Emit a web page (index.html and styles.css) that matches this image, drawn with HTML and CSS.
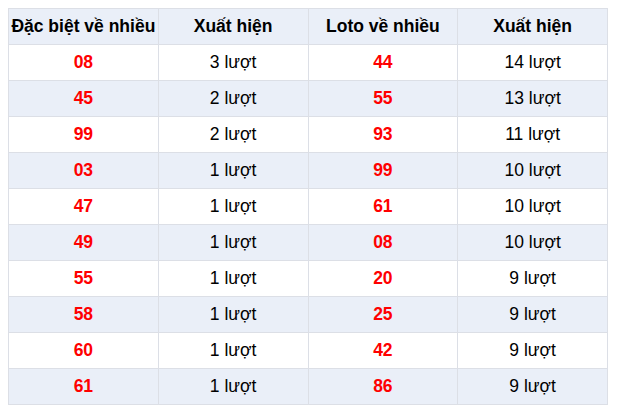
FILE: index.html
```html
<!DOCTYPE html>
<html lang="vi">
<head>
<meta charset="utf-8">
<link rel="stylesheet" href="styles.css">
</head>
<body>
<table class="stats">
  <thead>
    <tr><th>Đặc biệt về nhiều</th><th>Xuất hiện</th><th>Loto về nhiều</th><th>Xuất hiện</th></tr>
  </thead>
  <tbody>
    <tr><td class="num">08</td><td>3 lượt</td><td class="num">44</td><td>14 lượt</td></tr>
    <tr><td class="num">45</td><td>2 lượt</td><td class="num">55</td><td>13 lượt</td></tr>
    <tr><td class="num">99</td><td>2 lượt</td><td class="num">93</td><td>11 lượt</td></tr>
    <tr><td class="num">03</td><td>1 lượt</td><td class="num">99</td><td>10 lượt</td></tr>
    <tr><td class="num">47</td><td>1 lượt</td><td class="num">61</td><td>10 lượt</td></tr>
    <tr><td class="num">49</td><td>1 lượt</td><td class="num">08</td><td>10 lượt</td></tr>
    <tr><td class="num">55</td><td>1 lượt</td><td class="num">20</td><td>9 lượt</td></tr>
    <tr><td class="num">58</td><td>1 lượt</td><td class="num">25</td><td>9 lượt</td></tr>
    <tr><td class="num">60</td><td>1 lượt</td><td class="num">42</td><td>9 lượt</td></tr>
    <tr><td class="num">61</td><td>1 lượt</td><td class="num">86</td><td>9 lượt</td></tr>
  </tbody>
</table>
</body>
</html>
```

FILE: styles.css
```css
body {
  margin: 8px;
  background: #fff;
  font-family: "Liberation Sans", Arial, sans-serif;
  color: #000;
}
.stats {
  border-collapse: collapse;
  width: 600px;
  table-layout: fixed;
  font-size: 17.5px;
}
.stats th,
.stats td {
  border: 1px solid #dcdfe6;
  height: 35px;
  padding: 0;
  text-align: center;
  vertical-align: middle;
}
.stats th {
  background: #eaeff8;
  font-weight: bold;
}
.stats tbody tr:nth-child(even) td {
  background: #eaeff8;
}
.stats .num {
  color: #ff0000;
  font-weight: bold;
}
```
